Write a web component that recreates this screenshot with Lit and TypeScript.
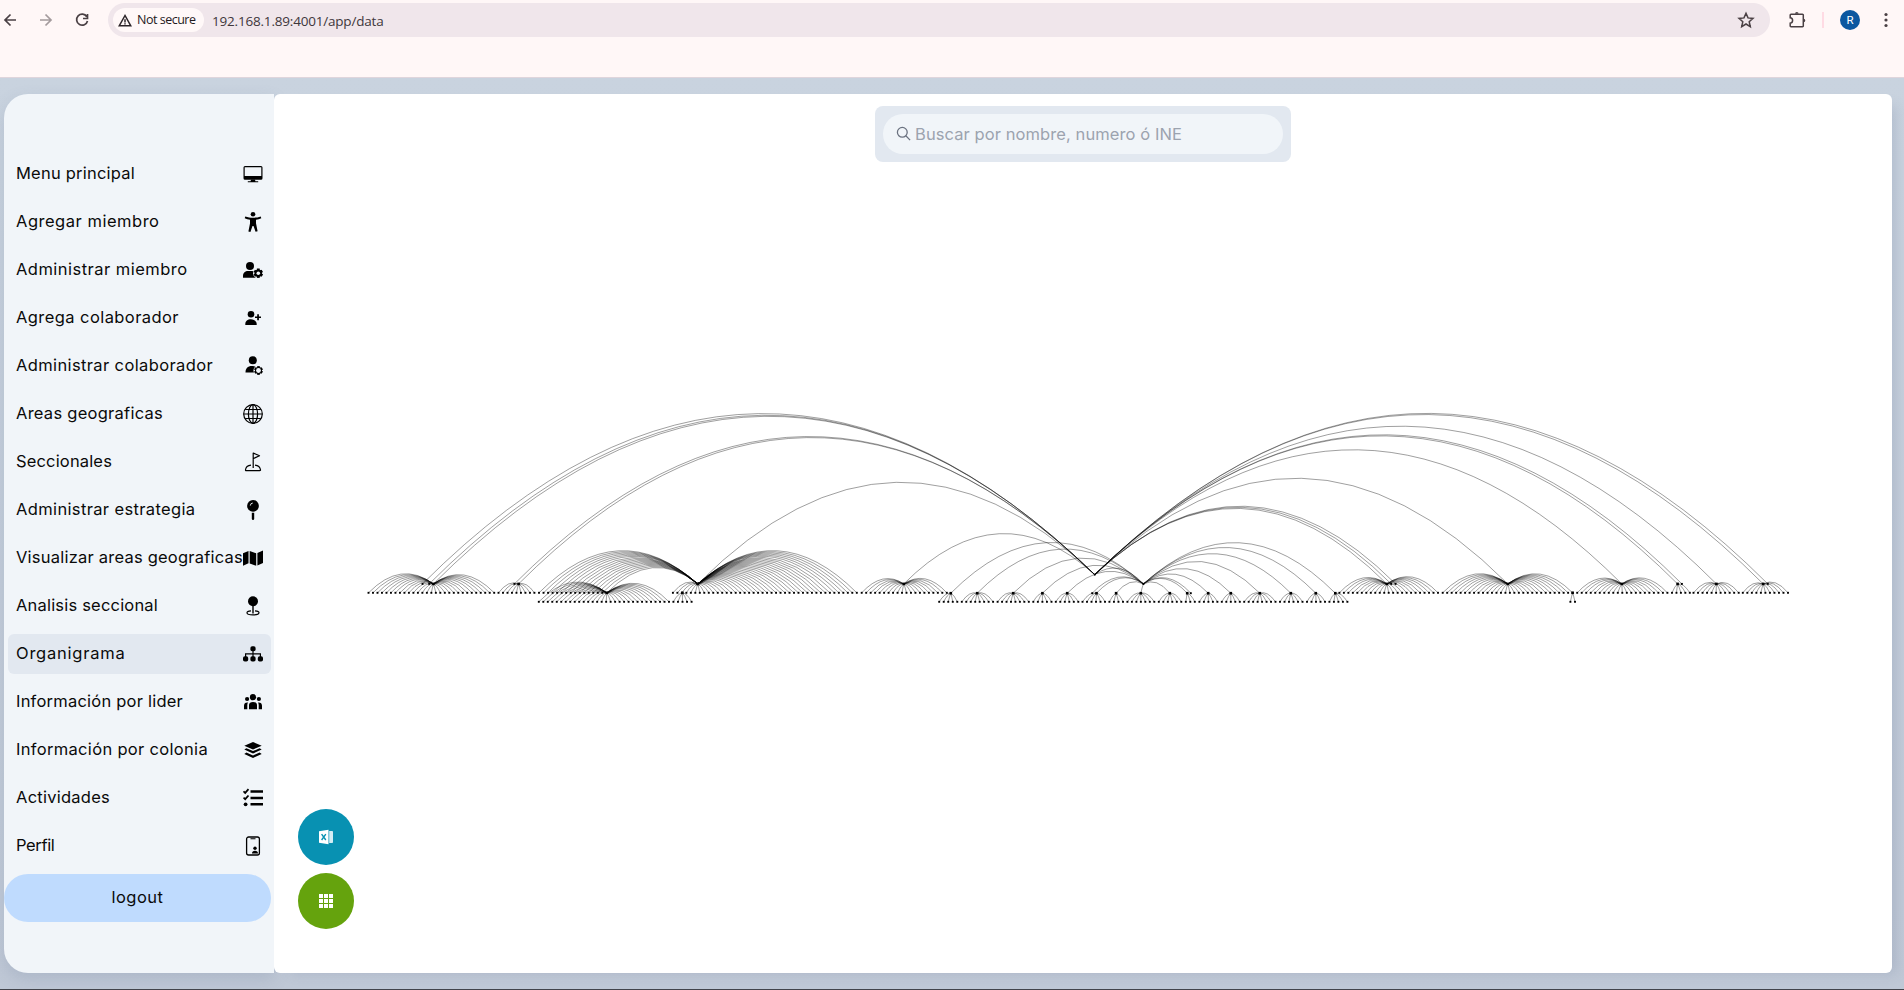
import { LitElement, html, svg, css, SVGTemplateResult } from "lit";
import { customElement } from "lit/decorators.js";
import { classMap } from "lit/directives/class-map.js";

const GEAR = (cx: number, cy: number, r: number, bg: number) => {
  const teeth = [];
  for (let i = 0; i < 6; i++) {
    teeth.push(svg`<rect x=${cx - r * 0.3} y=${cy - r} width=${r * 0.6} height=${r * 0.8} transform="rotate(${i * 60} ${cx} ${cy})"/>`);
  }
  return svg`<circle cx=${cx} cy=${cy} r=${bg} fill="#f1f5f9"/>${teeth}<circle cx=${cx} cy=${cy} r=${r * 0.78}/><circle cx=${cx} cy=${cy} r=${r * 0.38} fill="#f1f5f9"/>`;
};

const ICONS: Record<string, SVGTemplateResult> = {
  screen: svg`<path fill-rule="evenodd" d="M2 2h16a1.500 1.500 0 0 1 1.500 1.500v10.800a1.500 1.500 0 0 1-1.500 1.500H2A1.500 1.500 0 0 1 .5 14.300V3.500A1.500 1.500 0 0 1 2 2zm-.3 1.200v8.900h16.600V3.200z"/><path d="M8 15.500h4l.4 1.700h2.800v1H4.800v-1h2.800z"/>`,
  person: svg`<circle cx="10" cy="2.300" r="2.300"/><path d="M2.300 4.600c2.500 1 5 1.200 7.700 1.200s5.200-.2 7.700-1.200l.6 1.700c-1.700.8-3.500 1.200-5.300 1.500v3.500l1.600 8-2 .5L10.500 14h-1l-2.100 6-2-.5 1.600-8V7.800c-1.800-.3-3.600-.7-5.300-1.500z"/>`,
  userCog: svg`<circle cx="7" cy="6" r="4"/><path d="M0 17.800v-2C0 12.800 2.300 11 5 11h4c1.600 0 3 .7 4 1.800v5H1z"/>${GEAR(15.300, 13.200, 4.700, 5.300)}`,
  userPlus: svg`<circle cx="8" cy="6.300" r="3.300"/><path d="M2.300 17v-1c0-2.800 2.300-4.800 5.600-4.800s5.800 2 5.800 4.800v1z"/><path d="M14.200 6.200h1.700v2.200H18v1.700h-2.100v2.200h-1.700v-2.200H12V8.400h2.200z"/>`,
  userGear: svg`<circle cx="9.800" cy="4.300" r="4"/><path d="M2.500 16.500c0-4 2-6.500 6.500-6.500 1.500 0 2.600.2 3.500.8v5.700z"/>${GEAR(15.500, 14.500, 4.400, 5)}<circle cx="15.500" cy="14.500" r="2.400" fill="#f1f5f9"/>`,
  globe: svg`<g fill="none" stroke="#000" stroke-width="1.200"><circle cx="10" cy="10" r="9.300"/><ellipse cx="10" cy="10" rx="4.600" ry="9.300"/><path d="M10 .7v18.600M.7 10h18.600M2.200 5.500h15.600M2.200 14.500h15.600"/></g>`,
  flag: svg`<g fill="none" stroke="#000" stroke-width="1.200" stroke-linejoin="round"><path d="M10.200 16V1l6.300 2.800-6.300 2.800"/><path d="M8 13.100c-3 .3-5.200 2-5.500 4.700-.1.700.2.900.8.900h13.400c.7 0 .9-.3.800-.9-.4-2.700-2.500-4.400-5.500-4.700"/></g>`,
  pin: svg`<circle cx="10" cy="5.900" r="5.900"/><path d="M8.800 12.800h2.400v6.200l-.7 1h-1l-.7-1z"/><path d="M7.300 5.600A2.700 2.700 0 0 1 9.800 3" fill="none" stroke="#f1f5f9" stroke-width=".9"/>`,
  map: svg`<path d="M0 5.200 5.500 3v12.300L0 17.700zM6.700 3l6.500 2.200v12.500l-6.500-2.300zM14.400 5.100 20 2.600v12.500l-5.600 2.500z"/>`,
  geo: svg`<circle cx="10" cy="5.300" r="5"/><path d="M9.300 9.500h1.400v8H9.300z"/><path d="M8 14.900c-2.300.2-4 .9-4 1.900 0 1.300 2.700 2.100 6 2.100s6-.8 6-2.100c0-1-1.700-1.700-4-1.900" fill="none" stroke="#000" stroke-width="1.200"/>`,
  sitemap: svg`<rect x="7.400" y="2.300" width="5.200" height="5" rx="1.800"/><path d="M10 6v7M2.600 13V9.800h14.800V13" fill="none" stroke="#000" stroke-width="1.200"/><rect x="0" y="12.300" width="5.200" height="5.200" rx="1.800"/><rect x="7.400" y="12.300" width="5.200" height="5.200" rx="1.800"/><rect x="14.800" y="12.300" width="5.200" height="5.200" rx="1.800"/>`,
  team: svg`<circle cx="10" cy="5.200" r="3.100"/><circle cx="4.100" cy="7" r="2.100"/><circle cx="15.900" cy="7" r="2.100"/><path d="M6 17.300v-4.300c0-2 1.600-3 4-3s4 1 4 3v4.300zM1 17.300v-3.600c0-2.300 1.300-3.500 4-3.300-.5.700-.7 1.500-.7 2.600v4.300zM19 17.300v-3.600c0-2.300-1.300-3.500-4-3.300.5.700.7 1.500.7 2.600v4.300z"/>`,
  layers: svg`<path d="m10 2 8.700 3.700L10 9.500 1.300 5.700z"/><path d="m3.400 8.200 6.600 2.900 6.600-2.900 2.100 1.400-8.700 3.900-8.700-3.900zM3.400 12.500l6.600 2.900 6.600-2.900 2.100 1.400L10 18 1.300 13.900z"/>`,
  tasks: svg`<path d="M7.500 2.300H20v2.500H7.500zM7.500 8.700H20v2.500H7.500zM7.500 15.100H20v2.500H7.500z"/><circle cx="2.600" cy="16.300" r="1.900"/><path d="m.5 3.300 1.700 1.600 3.300-3.700M.5 9.600l1.700 1.600 3.300-3.700" fill="none" stroke="#000" stroke-width="1.800"/>`,
  badge: svg`<rect x="3.600" y="1" width="12.800" height="18" rx="2" fill="none" stroke="#000" stroke-width="1.300"/><path d="M7.500 2.300h5v1h-5zM9 17.500c0-2 1.200-2.800 3-2.800s3 .8 3 2.800z"/><circle cx="12" cy="12.300" r="1.700"/>`,
};

interface Item { label: string; icon: string; width: number; active?: boolean; }

const ITEMS: Item[] = [
  { label: "Menu principal", icon: "screen", width: 119 },
  { label: "Agregar miembro", icon: "person", width: 143.5 },
  { label: "Administrar miembro", icon: "userCog", width: 171.5 },
  { label: "Agrega colaborador", icon: "userPlus", width: 163 },
  { label: "Administrar colaborador", icon: "userGear", width: 197 },
  { label: "Areas geograficas", icon: "globe", width: 147 },
  { label: "Seccionales", icon: "flag", width: 96 },
  { label: "Administrar estrategia", icon: "pin", width: 179.5 },
  { label: "Visualizar areas geograficas", icon: "map", width: 227 },
  { label: "Analisis seccional", icon: "geo", width: 142 },
  { label: "Organigrama", icon: "sitemap", width: 109.5, active: true },
  { label: "Información por lider", icon: "team", width: 167 },
  { label: "Información por colonia", icon: "layers", width: 192 },
  { label: "Actividades", icon: "tasks", width: 94 },
  { label: "Perfil", icon: "badge", width: 38.5 },
];

type Point = [number, number];
const ROOT: Point = [1094.7, 574.6];
const Y1 = 583.9, Y2 = 592.8, Y3 = 601.8;

/* [node x, first leaf x, last leaf x, leaf count, extra sibling xs] */
type Group = [number, number, number, number, number[]];
const LEVEL_ONE: Group[] = [
  [433.4, 368.5, 494.2, 29, [422.5, 429.2]],
  [518.6, 498.5, 534.4, 9, [514.4]],
  [697.8, 539, 606.8, 16, []],
  [697.8, 672.9, 856.8, 42, []],
  [903.8, 861.7, 946.8, 20, []],
  [1386.8, 1339.4, 1438, 23, [1391.2, 1395.6]],
  [1507.8, 1442.7, 1572.6, 30, []],
  [1621.8, 1577.2, 1667.4, 21, []],
  [1677.6, 1672, 1689.8, 5, [1681.9]],
  [1716.4, 1693.5, 1738.7, 11, []],
  [1763.2, 1742.8, 1788, 11, [1767.8]],
];
const HUB: Point = [1143.4, Y1];
const LEVEL_TWO: Group[] = [
  [950.8, 939.2, 957.3, 5, []],
  [977.2, 961.8, 993.1, 8, []],
  [1013.2, 997.6, 1028.8, 8, []],
  [1042.4, 1033.3, 1051.5, 5, []],
  [1067.2, 1055.8, 1078.3, 6, []],
  [1096.5, 1082.5, 1105, 6, [1092.2]],
  [1116.1, 1109.4, 1123, 4, []],
  [1140.8, 1127.4, 1154.3, 7, []],
  [1169.8, 1158.8, 1181.3, 6, []],
  [1187.2, 1185.8, 1194.8, 3, [1190.8]],
  [1208.2, 1199.4, 1217.4, 5, []],
  [1230.8, 1221.8, 1239.8, 5, []],
  [1259.8, 1244.2, 1275.5, 8, []],
  [1290.8, 1280, 1302.5, 6, []],
  [1315.8, 1307, 1325, 5, []],
  [1335.3, 1329.4, 1347.4, 5, []],
];
const DEEP: Group[] = [
  [606.8, 538.8, 669, 30, []],
  [682.4, 673.4, 691.6, 5, []],
  [1572.6, 1570.4, 1575, 2, []],
];

function buildGraph() {
  const arcs: string[] = [];
  const dots: [number, number, number][] = [];
  const arc = (a: Point, b: Point) => {
    const w = Math.abs(a[0] - b[0]);
    const lift = Math.max(0, w * 0.2495 - Math.min(2.1, w * 0.03)) * 2;
    arcs.push(`M${a[0]} ${a[1]}Q${(a[0] + b[0]) / 2} ${(a[1] + b[1]) / 2 - lift} ${b[0]} ${b[1]}`);
  };
  const fan = (g: Group, y: number, leafY: number) => {
    const step = (g[2] - g[1]) / (g[3] - 1);
    for (let i = 0; i < g[3]; i++) {
      const x = g[1] + i * step;
      arc([g[0], y], [x, leafY]);
      dots.push([x, leafY, 1.9]);
    }
    dots.push([g[0], y, 2.6]);
    g[4].forEach((x) => dots.push([x, y, 1.9]));
  };
  const linked = new Set<number>();
  for (const g of LEVEL_ONE) {
    if (!linked.has(g[0])) {
      linked.add(g[0]);
      [g[0], ...g[4]].forEach((x) => arc(ROOT, [x, Y1]));
    }
    fan(g, Y1, Y2);
  }
  arc(ROOT, HUB);
  dots.push([HUB[0], HUB[1], 2], [ROOT[0], ROOT[1], 1.8]);
  for (const g of LEVEL_TWO) {
    [g[0], ...g[4]].forEach((x) => arc(HUB, [x, Y2 + 0.4]));
    fan(g, Y2 + 0.4, Y3);
  }
  DEEP.forEach((g) => fan(g, Y2, Y3));
  return { arcs, dots };
}

@customElement("org-graph")
class OrgGraph extends LitElement {
  static styles = css`
    :host { display: block; }
    .canvas { display: block; width: 100%; height: 100%; }
    .arc { fill: none; stroke: #000; stroke-opacity: 0.4; stroke-width: 0.95; }
  `;
  render() {
    const { arcs, dots } = buildGraph();
    return html`<svg class="canvas" viewBox="274 394 1618 222">
      ${arcs.map((d) => svg`<path class="arc" d=${d}/>`)}
      ${dots.map(([x, y, s]) => svg`<rect x=${x - s / 2} y=${y - s / 2} width=${s} height=${s}/>`)}
    </svg>`;
  }
}

@customElement("app-root")
class AppRoot extends LitElement {
  static styles = css`
    :host { display: block; width: 100vw; height: 100vh; overflow: hidden; font-family: Inter, "Open Sans", sans-serif; }
    * { box-sizing: border-box; }
    .page { height: 100%; display: flex; flex-direction: column; }
    .chrome { height: 78px; flex: none; background: #fff7f7; border-bottom: 1px solid #dfd5dc; padding-top: 3px; }
    .bar { height: 34px; display: flex; align-items: center; }
    .nav { display: flex; align-items: center; width: 108px; gap: 16px; color: #4a4044; }
    .nav svg { width: 20px; height: 20px; flex: none; }
    .faded { opacity: 0.5; }
    .omnibox { width: 1662px; height: 34px; border-radius: 17px; background: #f0e6eb; display: flex; align-items: center; padding: 0 15px 0 5px; }
    .chip { width: 91px; height: 24px; border-radius: 12px; background: #fff8f8; display: flex; align-items: center; padding-left: 5px; gap: 5px; }
    .chip svg { width: 14px; height: 13px; flex: none; }
    .omnibox .label { font-family: "Open Sans", sans-serif; line-height: 20px; }
    .chip .label { font-size: 12.500px; font-weight: 500; color: #1f1a1d; }
    .url { margin-left: 8px; flex: 1; }
    .url .label { font-size: 13.500px; font-weight: 400; color: #40373b; }
    .star { width: 18px; height: 18px; }
    .puzzle { width: 20px; height: 20px; margin-left: 17px; }
    .divider { width: 2px; height: 16px; background: #ffdbe4; margin-left: 15px; }
    .avatar { width: 20px; height: 20px; margin-left: 16px; border-radius: 50%; background: #0b57a0; color: #fff; font: 11.500px/20px Roboto, sans-serif; text-align: center; }
    .dots { width: 6px; height: 16px; margin-left: 23px; }
    .body { flex: 1; min-height: 0; display: flex; padding: 16px 12px 15px 4px; background: linear-gradient(180deg, #c9d3df, #bfc8d6); }
    .sidebar { width: 270px; height: 879px; background: #f1f5f9; border-radius: 24px 0 0 24px; padding: 60px 3px 0 0; display: flex; flex-direction: column; gap: 8px; box-shadow: 0 6px 16px rgba(90, 105, 140, 0.18); }
    .item { height: 40px; margin-left: 4px; border-radius: 6px; padding: 0 8px 2px; display: flex; align-items: center; justify-content: space-between; }
    .item.active { background: #e2e8f0; }
    .label { font-size: 16.500px; line-height: 24px; white-space: nowrap; color: #0a0a0a; font-weight: 370; flex: none; }
    .icon { width: 20px; height: 20px; flex: none; margin-top: 1px; }
    .label + .icon { margin-left: -4px; }
    .logout { height: 48px; border: 0; padding: 0 0 2px; border-radius: 24px; background: #bfdbfe; font-family: inherit; flex: none; }
    .panel { flex: 1; height: 879px; background: #fff; border-radius: 6px; display: grid; grid-template-rows: 300px 222px 1fr; box-shadow: 10px 6px 12px -6px rgba(90, 105, 140, 0.2); }
    .search { justify-self: center; margin: 12px 0 0 0; width: 416px; height: 56px; padding: 8px; border-radius: 8px; background: #e2e8f0; }
    .field { height: 40px; border-radius: 20px; background: #f1f5f9; display: flex; align-items: center; padding: 0 0 1px 13px; gap: 4px; }
    .field svg { width: 15px; height: 15px; }
    .field .label { color: #9ca3af; font-weight: 400; }
    .actions { display: flex; flex-direction: column; gap: 8px; padding: 193px 0 0 24px; }
    .fab { width: 56px; height: 56px; border-radius: 50%; display: grid; place-items: center; background: #0891b2; }
    .fab.green { background: #65a30d; }
    .fab svg { width: 16px; height: 16px; }
    .edge { height: 1px; flex: none; background: #42444b; }
  `;

  firstUpdated() {
    this.renderRoot.querySelectorAll<HTMLElement>(".label").forEach((el) => {
      const count = (el.textContent ?? "").trim().length;
      const spare = Number(el.dataset.width) - el.getBoundingClientRect().width;
      el.style.letterSpacing = `${spare / count}px`;
    });
  }

  render() {
    return html`<div class="page">
      <header class="chrome"><div class="bar">
        <div class="nav">
          <svg viewBox="0 0 20 20" fill="none" stroke="currentColor" stroke-width="1.700"><path d="M16 10H5.500M10.500 4.500 5 10l5.500 5.500"/></svg>
          <svg class="faded" viewBox="0 0 20 20" fill="none" stroke="currentColor" stroke-width="1.700"><path d="M4 10h10.500M9.500 4.500 15 10l-5.500 5.500"/></svg>
          <svg viewBox="0 0 20 20" fill="none" stroke="currentColor" stroke-width="1.700"><path d="M14.800 6.700A5.500 5.500 0 1 0 15.500 11M15.500 4v4.500H11"/></svg>
        </div>
        <div class="omnibox">
          <div class="chip"><svg viewBox="0 0 14 13" fill="none" stroke="#2b2428" stroke-width="1.500"><path d="M7 1.500 1.200 11.800h11.600zM7 5.200v3.200M7 9.300v1.300"/></svg><span class="label" data-width="58.500">Not secure</span></div>
          <div class="url"><span class="label" data-width="171.500">192.168.1.89:4001/app/data</span></div>
          <svg class="star" viewBox="0 0 18 18" fill="none" stroke="#4a4044" stroke-width="1.500"><path d="m9 2.300 2 4.600 5 .5-3.800 3.300 1.100 4.900L9 13l-4.300 2.600 1.100-4.900L2 7.400l5-.5z"/></svg>
        </div>
        <svg class="puzzle" viewBox="0 0 20 20" fill="none" stroke="#4a4044" stroke-width="1.500"><path d="M4 4.200h11.500a.8.800 0 0 1 .8.800v11a.8.800 0 0 1-.8.800H4a.8.800 0 0 1-.8-.8v-2.800c3.200-.4 3.200-5 0-5.400V5a.8.800 0 0 1 .8-.8z"/><path d="M8 3.800a1.800 1.800 0 0 1 3.600 0zM16.500 8.700a1.800 1.800 0 0 1 0 3.600z" fill="#4a4044" stroke="none"/></svg>
        <div class="divider"></div>
        <div class="avatar">R</div>
        <svg class="dots" viewBox="0 0 6 16" fill="#4a4044"><circle cx="3" cy="2.500" r="1.600"/><circle cx="3" cy="8" r="1.600"/><circle cx="3" cy="13.500" r="1.600"/></svg>
      </div></header>
      <main class="body">
        <nav class="sidebar">
          ${ITEMS.map((it) => html`<div class=${classMap({ item: true, active: !!it.active })}>
            <span class="label" data-width=${it.width}>${it.label}</span>
            <svg class="icon" viewBox="0 0 20 20">${ICONS[it.icon]}</svg>
          </div>`)}
          <button class="logout"><span class="label" data-width="52">logout</span></button>
        </nav>
        <section class="panel">
          <div class="search"><div class="field">
            <svg viewBox="0 0 15 15" fill="none" stroke="#6b7280" stroke-width="1.300"><circle cx="6.300" cy="6.300" r="4.900"/><path d="m9.800 9.800 4.300 4.300"/></svg>
            <span class="label" data-width="267">Buscar por nombre, numero ó INE</span>
          </div></div>
          <org-graph></org-graph>
          <div class="actions">
            <div class="fab"><svg viewBox="0 0 16 16"><path d="M1 2.200 10.500 .8v14.400L1 13.800z" fill="#fff"/><path d="M11.200 2h2.600c.7 0 1.200.4 1.200 1v10c0 .6-.5 1-1.200 1h-2.600z" fill="#d3edf4"/><path d="m3.600 5.200 4.200 5.800M7.800 5.200 3.600 11" stroke="#0891b2" stroke-width="1.400"/></svg></div>
            <div class="fab green"><svg viewBox="0 0 16 16" fill="#fff"><path d="M1 1h4v4H1zM6 1h4v4H6zM11 1h4v4h-4zM1 6h4v4H1zM6 6h4v4H6zM11 6h4v4h-4zM1 11h4v4H1zM6 11h4v4H6zM11 11h4v4h-4z"/></svg></div>
          </div>
        </section>
      </main>
      <div class="edge"></div>
    </div>`;
  }
}
